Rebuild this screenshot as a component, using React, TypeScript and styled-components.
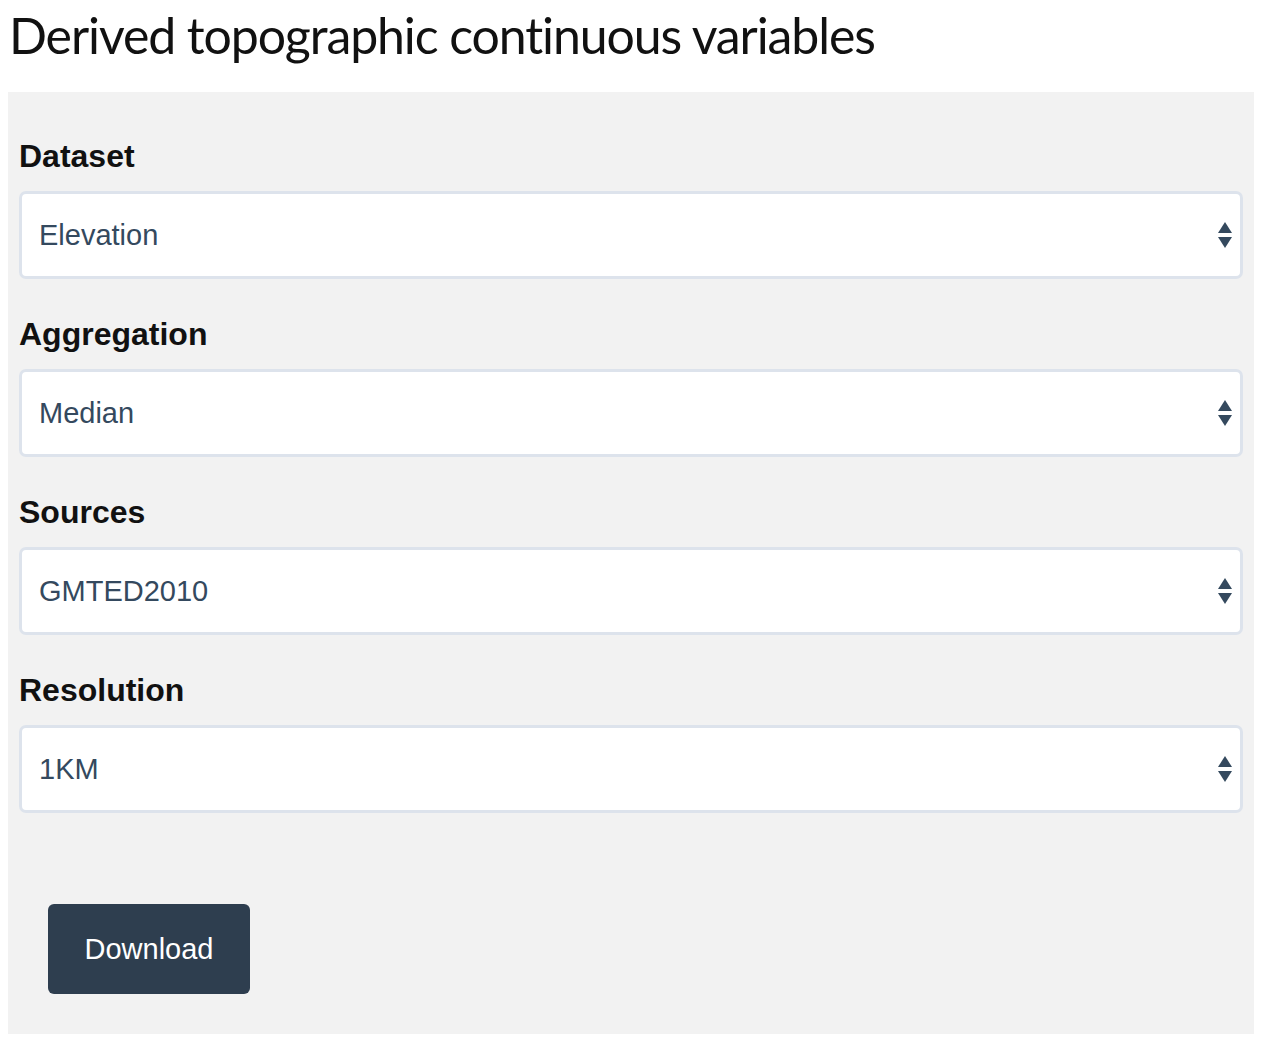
import * as React from "react";
import styled, { createGlobalStyle } from "styled-components";

const GlobalStyle = createGlobalStyle`
  body {
    margin: 8px 12px 8px 8px;
    background: #ffffff;
    font-family: "Liberation Sans", Arial, sans-serif;
  }
`;

const Title = styled.h1`
  margin: 0;
  padding: 0 0 0 1px;
  height: 84px;
  font-family: Lato, "Liberation Sans", sans-serif;
  font-weight: 400;
  font-size: 50px;
  line-height: 54px;
  letter-spacing: -1.1px;
  color: #111111;
`;

const Panel = styled.form`
  background: #f2f2f2;
  padding: 44px 11px 40px 11px;
`;

const Field = styled.div`
  margin-bottom: 35px;
`;

const Label = styled.label`
  display: block;
  font-weight: 700;
  font-size: 32px;
  line-height: 40px;
  color: #111111;
  margin-bottom: 15px;
`;

const SelectWrap = styled.div`
  position: relative;
`;

const Select = styled.select`
  appearance: none;
  -webkit-appearance: none;
  display: block;
  width: 100%;
  height: 88px;
  box-sizing: border-box;
  border: 3px solid #dde3ec;
  border-radius: 7px;
  background: #ffffff;
  padding: 0 60px 0 17px;
  font-family: "Liberation Sans", Arial, sans-serif;
  font-size: 29px;
  color: #34495e;
  outline: none;
`;

const Arrows = styled.svg`
  position: absolute;
  right: 11px;
  top: 50%;
  transform: translateY(-50%);
  pointer-events: none;
`;

const ButtonRow = styled.div`
  padding: 56px 0 0 29px;
`;

const DownloadButton = styled.button`
  width: 202px;
  height: 90px;
  border: none;
  border-radius: 6px;
  background: #2e3e4f;
  color: #ffffff;
  font-family: "Liberation Sans", Arial, sans-serif;
  font-size: 29px;
  cursor: pointer;
`;

type SelectFieldProps = {
  label: string;
  options: string[];
};

function SelectField({ label, options }: SelectFieldProps) {
  return (
    <Field>
      <Label>{label}</Label>
      <SelectWrap>
        <Select defaultValue={options[0]}>
          {options.map((o) => (
            <option key={o}>{o}</option>
          ))}
        </Select>
        <Arrows width="14" height="26" viewBox="0 0 14 26">
          <polygon points="7,0 14,11 0,11" fill="#34495e" />
          <polygon points="0,15 14,15 7,26" fill="#34495e" />
        </Arrows>
      </SelectWrap>
    </Field>
  );
}

export default function App() {
  return (
    <>
      <GlobalStyle />
      <Title>Derived topographic continuous variables</Title>
      <Panel onSubmit={(e) => e.preventDefault()}>
        <SelectField label="Dataset" options={["Elevation", "Slope", "Aspect"]} />
        <SelectField label="Aggregation" options={["Median", "Mean", "Minimum", "Maximum"]} />
        <SelectField label="Sources" options={["GMTED2010", "SRTM"]} />
        <SelectField label="Resolution" options={["1KM", "5KM", "10KM"]} />
        <ButtonRow>
          <DownloadButton type="submit">Download</DownloadButton>
        </ButtonRow>
      </Panel>
    </>
  );
}
